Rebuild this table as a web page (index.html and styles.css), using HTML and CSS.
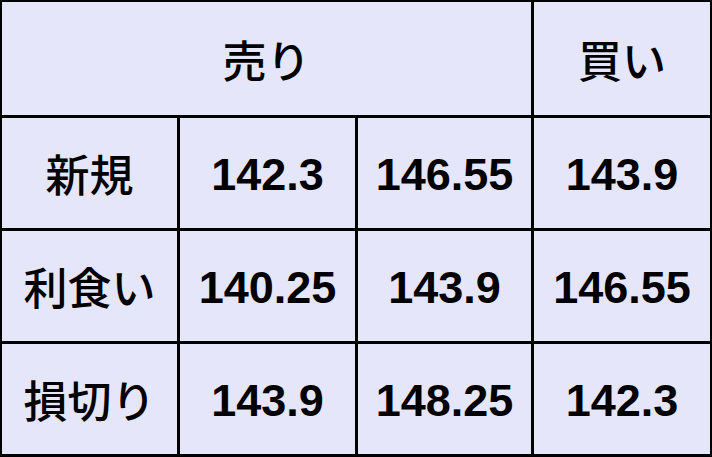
FILE: index.html
```html
<!DOCTYPE html>
<html lang="ja">
<head>
<meta charset="utf-8">
<link rel="stylesheet" href="styles.css">
</head>
<body>
<div class="table">
  <div class="cell head span3">売り</div>
  <div class="cell head">買い</div>

  <div class="cell label">新規</div>
  <div class="cell">142.3</div>
  <div class="cell">146.55</div>
  <div class="cell">143.9</div>

  <div class="cell label">利食い</div>
  <div class="cell">140.25</div>
  <div class="cell">143.9</div>
  <div class="cell">146.55</div>

  <div class="cell label">損切り</div>
  <div class="cell">143.9</div>
  <div class="cell">148.25</div>
  <div class="cell">142.3</div>
</div>
</body>
</html>
```

FILE: styles.css
```css
html, body {
  margin: 0;
  padding: 0;
  background: #e6e6fa;
}

.table {
  display: grid;
  grid-template-columns: 175px 175px 173px 176px;
  grid-template-rows: 113px 110px 110px 110px;
  gap: 3px;
  padding: 2px 2px 3px 2px;
  background: #000;
  width: 712px;
  height: 457px;
  box-sizing: border-box;
}

.cell {
  background: #e6e6fa;
  display: flex;
  align-items: center;
  justify-content: center;
  font-family: "Liberation Sans", "Noto Sans CJK JP", sans-serif;
  font-weight: 700;
  font-size: 45px;
  color: #000;
  line-height: 1;
  padding-top: 2px;
}

.span3 {
  grid-column: 1 / span 3;
}

.head,
.label {
  font-family: "Noto Sans CJK JP", sans-serif;
  font-weight: 500;
  font-size: 44px;
  padding-top: 0;
}
```
